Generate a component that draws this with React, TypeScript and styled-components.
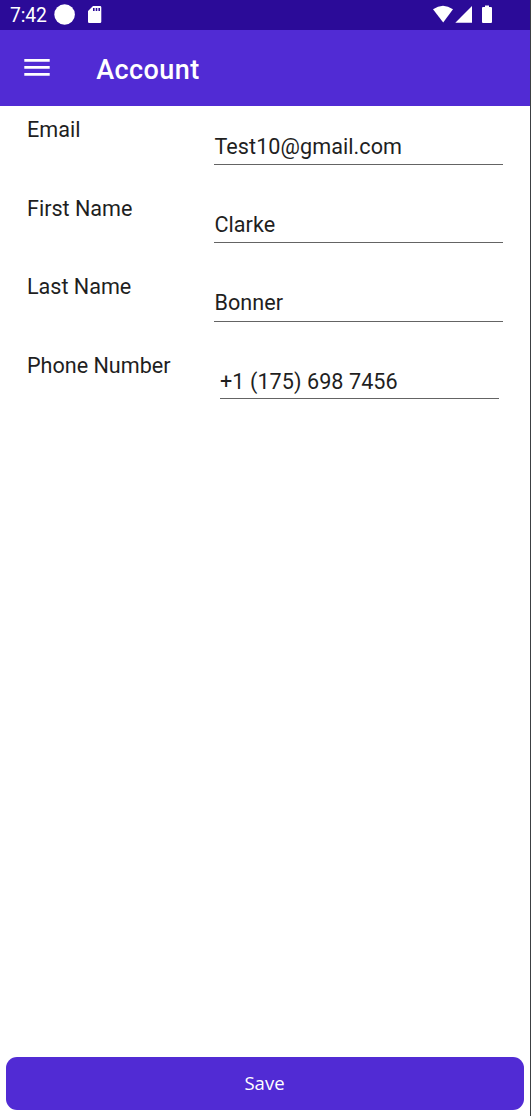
import React from 'react';
import styled, { createGlobalStyle } from 'styled-components';

const GlobalStyle = createGlobalStyle`
  * { box-sizing: border-box; }
  body { margin: 0; background: #fff; overflow: hidden; }
`;

const Screen = styled.div`
  display: flex;
  flex-direction: column;
  width: 531px;
  height: 1116px;
  background: #fff;
  border-right: 1px solid #3c4043;
  color: #1f1f1f;
  font-family: Roboto, sans-serif;
`;

const StatusBar = styled.header`
  display: flex;
  align-items: center;
  justify-content: space-between;
  height: 30px;
  flex: none;
  padding: 0 38px 0 10px;
  background: #2b0b98;
  color: #fff;
`;

const StatusGroup = styled.div`
  display: flex;
  align-items: center;
`;

const Clock = styled.span`
  width: 44px;
  padding-top: 1px;
  font-size: 19.3px;
  line-height: 30px;
  letter-spacing: -0.1px;
  white-space: nowrap;
`;

const StatusIcon = styled.svg`
  display: block;
  flex: none;
  fill: #fff;
`;

const AppBar = styled.div`
  display: flex;
  flex: none;
  height: 76px;
  padding-left: 24px;
  background: #512bd4;
`;

const MenuButton = styled.button`
  width: 26px;
  height: 18px;
  margin: 28px 46.2px 0 0;
  padding: 0;
  border: 0;
  background: none;
`;

const Title = styled.h1`
  margin: 0;
  padding-top: 2px;
  color: #fff;
  font-size: 27px;
  font-weight: 500;
  line-height: 76px;
  letter-spacing: 0.42px;
`;

const Form = styled.form`
  flex: 1;
  padding: 11px 27px 0;
`;

const Row = styled.label`
  display: grid;
  grid-template-columns: 187px 289px;
  align-items: start;
  height: 78.4px;
`;

const Label = styled.span`
  padding-top: 0.45px;
  font-size: 21.6px;
  line-height: 26px;
  letter-spacing: -0.02px;
`;

const Field = styled.input<{ $inset?: boolean }>`
  width: ${(p) => (p.$inset ? 279 : 289)}px;
  height: ${(p) => (p.$inset ? 31.5 : 33)}px;
  margin: 15px 0 0 ${(p) => (p.$inset ? 6 : 0)}px;
  padding: 0 0 ${(p) => (p.$inset ? 2 : 4)}px ${(p) => (p.$inset ? 0 : 0.4)}px;
  border: 0;
  border-bottom: 1px solid #646464;
  outline: 0;
  background: none;
  color: #1f1f1f;
  font: 21.6px/26px Roboto, sans-serif;
  letter-spacing: 0.06px;
`;

const SaveButton = styled.button`
  flex: none;
  height: 53px;
  margin: 0 6px 6px;
  padding: 0 1px 1px 0;
  border: 0;
  border-radius: 11px;
  background: #512bd4;
  color: #fff;
  font: 18.5px/52px 'Open Sans', sans-serif;
`;

const fields = [
  { label: 'Email', value: 'Test10@gmail.com' },
  { label: 'First Name', value: 'Clarke' },
  { label: 'Last Name', value: 'Bonner' },
  { label: 'Phone Number', value: '+1 (175) 698 7456', inset: true },
];

export default function App() {
  return (
    <>
      <GlobalStyle />
      <Screen>
        <StatusBar>
          <StatusGroup>
            <Clock>7:42</Clock>
            <StatusIcon width="50" height="30" viewBox="54 0 50 30">
              <circle cx="64.6" cy="14.5" r="10.3" />
              <path fillRule="evenodd" d="M93 6h7q1.3 0 1.3 1.3v14.4q0 1.3-1.3 1.3H89.300q-1.300 0-1.300-1.300V11zM93 8v3h1.600V8zm2.700 0v3h1.600V8zm2.700 0v3H100V8z" />
            </StatusIcon>
          </StatusGroup>
          <StatusIcon width="60" height="30" viewBox="432 0 60 30">
            <path d="M433 9.300Q443 2 453 9.300L443.200 22.500z" />
            <path d="M455.300 22.700 472 6v16.700z" />
            <path d="M485 5.500h4V7h2q1 0 1 1v14q0 1-1 1h-8q-1 0-1-1V8q0-1 1-1h2z" />
          </StatusIcon>
        </StatusBar>
        <AppBar>
          <MenuButton aria-label="Menu">
            <StatusIcon width="26" height="18" viewBox="0 0 26 18">
              <path d="M.3 1h25.400v2.800H.3zM.3 8h25.400v2.800H.3zM.3 15h25.400v2.800H.3z" />
            </StatusIcon>
          </MenuButton>
          <Title>Account</Title>
        </AppBar>
        <Form>
          {fields.map((f) => (
            <Row key={f.label}>
              <Label>{f.label}</Label>
              <Field $inset={f.inset} defaultValue={f.value} spellCheck={false} />
            </Row>
          ))}
        </Form>
        <SaveButton type="button">Save</SaveButton>
      </Screen>
    </>
  );
}
